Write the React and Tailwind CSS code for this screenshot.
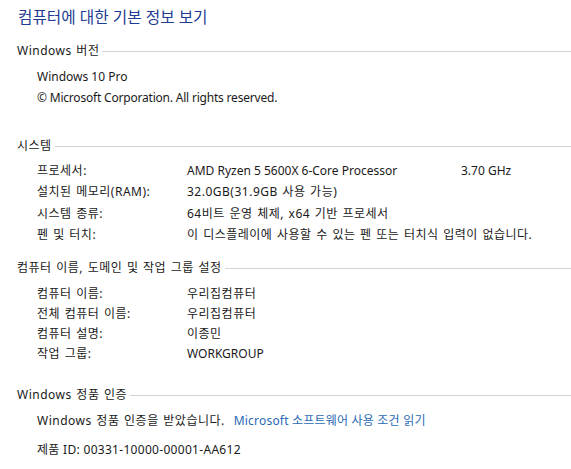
import React from 'react';

const font = { fontFamily: '"Noto Sans", "Noto Sans CJK KR", sans-serif' };

// Korean text in the reference runs a little wider than Noto's
const ko = 'tracking-[0.5px] [word-spacing:1px]';

function SectionHeader({ title, className = '' }) {
  return (
    <div className={`flex items-center h-[24px] pl-[17px] ${className}`}>
      <span className={`whitespace-nowrap ${ko}`}>{title}</span>
      <div className="flex-1 h-px bg-[#d4d4d4] ml-[3px] mt-[1px]"></div>
    </div>
  );
}

function Row({ label, value, extra, h = 'h-[21px]' }) {
  return (
    <div className={`flex items-center ${h} pl-[37px]`}>
      <span className={`w-[150px] whitespace-nowrap ${ko}`}>{label}</span>
      <span className={`w-[274px] whitespace-nowrap ${/[가-힣]/.test(value) ? ko : ''}`}>{value}</span>
      {extra && <span className="whitespace-nowrap">{extra}</span>}
    </div>
  );
}

export default function App() {
  const system = [
    { label: '프로세서:', value: 'AMD Ryzen 5 5600X 6-Core Processor', extra: '3.70 GHz' },
    { label: '설치된 메모리(RAM):', value: '32.0GB(31.9GB 사용 가능)' },
    { label: '시스템 종류:', value: '64비트 운영 체제, x64 기반 프로세서' },
    { label: '펜 및 터치:', value: '이 디스플레이에 사용할 수 있는 펜 또는 터치식 입력이 없습니다.' },
  ];

  const names = [
    { label: '컴퓨터 이름:', value: '우리집컴퓨터' },
    { label: '전체 컴퓨터 이름:', value: '우리집컴퓨터' },
    { label: '컴퓨터 설명:', value: '이종민' },
    { label: '작업 그룹:', value: 'WORKGROUP' },
  ];

  return (
    <div className="w-[571px] h-[469px] bg-white text-[12px] text-[#1a1a1a] overflow-hidden" style={font}>
      {/* Title */}
      <div className="h-[36px] flex items-center pl-[18px] text-[15.7px] text-[#1e3c91]">
        컴퓨터에 대한 기본 정보 보기
      </div>

      {/* Windows edition */}
      <SectionHeader title="Windows 버전" className="h-[30px]" />
      <div className="flex items-center h-[21px] pl-[37px]">Windows 10 Pro</div>
      <div className="flex items-center h-[22px] pl-[37px] tracking-[-0.2px]">© Microsoft Corporation. All rights reserved.</div>

      {/* System */}
      <SectionHeader title="시스템" className="mt-[25px]" />
      <div className="mt-[2px]">
        {system.map((r) => (
          <Row key={r.label} {...r} h="h-[21.5px]" />
        ))}
      </div>

      {/* Computer name */}
      <SectionHeader title="컴퓨터 이름, 도메인 및 작업 그룹 설정" className="mt-[10px]" />
      <div className="mt-[4px]">
        {names.map((r) => (
          <Row key={r.label} {...r} h="h-[20px]" />
        ))}
      </div>

      {/* Activation */}
      <SectionHeader title="Windows 정품 인증" className="mt-[19px]" />
      <div className="flex items-center h-[20px] pl-[37px] mt-[4px]">
        <span className={ko}>Windows 정품 인증을 받았습니다.</span>
        <span className="ml-[9px] text-[#2a6ab4] tracking-[0.2px]">Microsoft 소프트웨어 사용 조건 읽기</span>
      </div>
      <div className="flex items-center h-[20px] pl-[37px] mt-[9px] tracking-[0.3px]">제품 ID: 00331-10000-00001-AA612</div>
    </div>
  );
}
